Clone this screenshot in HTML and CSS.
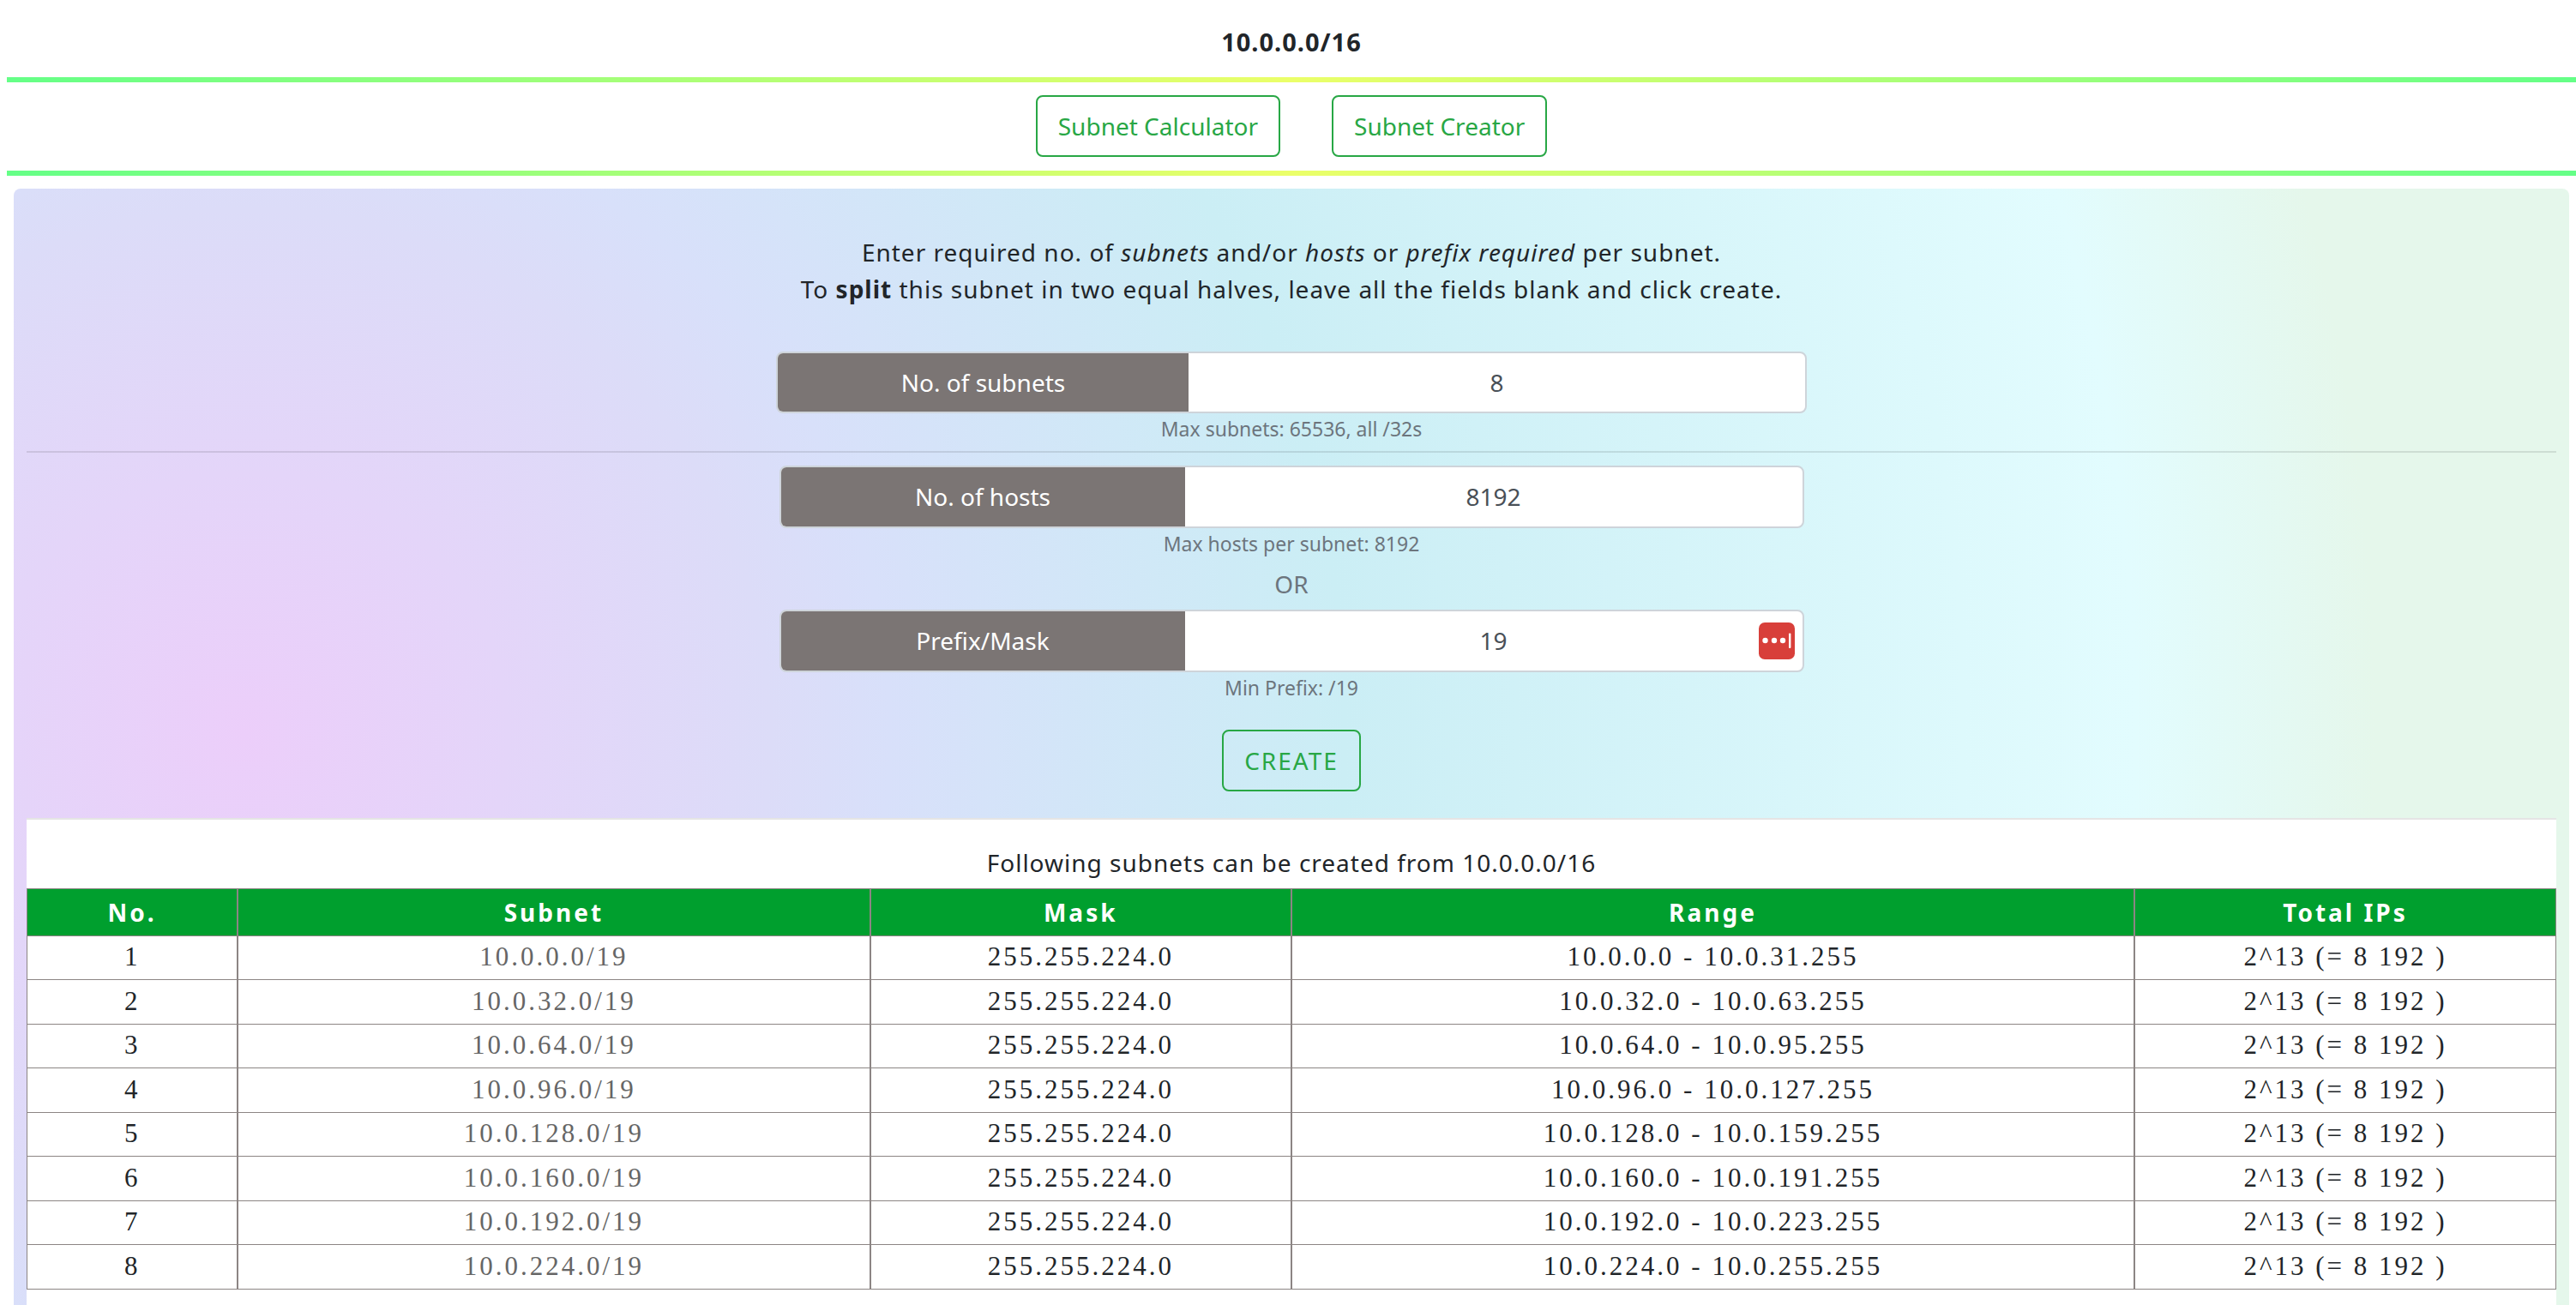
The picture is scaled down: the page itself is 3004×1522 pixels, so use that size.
FILE: index.html
```html
<!DOCTYPE html>
<html lang="en">
<head>
<meta charset="utf-8">
<title>Subnet Creator</title>
<link rel="stylesheet" href="styles.css">
</head>
<body>
<header class="title"><h1>10.0.0.0/16</h1></header>
<nav class="modes">
  <button type="button" class="btn">Subnet Calculator</button>
  <button type="button" class="btn">Subnet Creator</button>
</nav>
<main class="panel">
  <form class="form">
    <p class="intro">Enter required no. of <em>subnets</em> and/or <em>hosts</em> or <em>prefix required</em> per subnet.<br>To <strong>split</strong> this subnet in two equal halves, leave all the fields blank and click create.</p>
    <div class="group group-wide">
      <label for="subnets">No. of subnets</label>
      <input id="subnets" type="text" value="8">
    </div>
    <small class="hint">Max subnets: 65536, all /32s</small>
    <hr class="rule">
    <div class="group">
      <label for="hosts">No. of hosts</label>
      <input id="hosts" type="text" value="8192">
    </div>
    <small class="hint">Max hosts per subnet: 8192</small>
    <span class="or">OR</span>
    <div class="group">
      <label for="prefix">Prefix/Mask</label>
      <input id="prefix" type="text" value="19">
      <svg class="vault" viewBox="0 0 42 43" aria-hidden="true">
        <rect width="42" height="43" rx="7" fill="#d83f3a"/>
        <g fill="#fff"><circle cx="7.500" cy="21" r="3.200"/><circle cx="18" cy="21" r="3.200"/><circle cx="28" cy="21" r="3.200"/><rect x="35" y="12.500" width="2.400" height="17.500" rx="1"/></g>
      </svg>
    </div>
    <small class="hint">Min Prefix: /19</small>
    <button type="button" class="btn create">CREATE</button>
  </form>
  <section class="result">
    <table>
      <caption>Following subnets can be created from 10.0.0.0/16</caption>
      <colgroup><col class="c1"><col class="c3"><col class="c2"><col class="c4"><col class="c2"></colgroup>
      <thead><tr><th>No.</th><th>Subnet</th><th>Mask</th><th>Range</th><th>Total IPs</th></tr></thead>
      <tbody>
        <tr><td>1</td><td><a href="#">10.0.0.0/19</a></td><td>255.255.224.0</td><td>10.0.0.0 - 10.0.31.255</td><td>2^13 (= 8 192 )</td></tr>
        <tr><td>2</td><td><a href="#">10.0.32.0/19</a></td><td>255.255.224.0</td><td>10.0.32.0 - 10.0.63.255</td><td>2^13 (= 8 192 )</td></tr>
        <tr><td>3</td><td><a href="#">10.0.64.0/19</a></td><td>255.255.224.0</td><td>10.0.64.0 - 10.0.95.255</td><td>2^13 (= 8 192 )</td></tr>
        <tr><td>4</td><td><a href="#">10.0.96.0/19</a></td><td>255.255.224.0</td><td>10.0.96.0 - 10.0.127.255</td><td>2^13 (= 8 192 )</td></tr>
        <tr><td>5</td><td><a href="#">10.0.128.0/19</a></td><td>255.255.224.0</td><td>10.0.128.0 - 10.0.159.255</td><td>2^13 (= 8 192 )</td></tr>
        <tr><td>6</td><td><a href="#">10.0.160.0/19</a></td><td>255.255.224.0</td><td>10.0.160.0 - 10.0.191.255</td><td>2^13 (= 8 192 )</td></tr>
        <tr><td>7</td><td><a href="#">10.0.192.0/19</a></td><td>255.255.224.0</td><td>10.0.192.0 - 10.0.223.255</td><td>2^13 (= 8 192 )</td></tr>
        <tr><td>8</td><td><a href="#">10.0.224.0/19</a></td><td>255.255.224.0</td><td>10.0.224.0 - 10.0.255.255</td><td>2^13 (= 8 192 )</td></tr>
      </tbody>
    </table>
  </section>
</main>
</body>
</html>
```
FILE: styles.css
```css
* { box-sizing: border-box; }

body {
  margin: 0;
  padding-left: 8px;
  min-height: 100vh;
  display: flex;
  flex-direction: column;
  background: #fff;
  color: #212529;
  font-family: "Noto Sans", "Open Sans", sans-serif;
  font-size: 28px;
  line-height: 43px;
}

.title { padding: 27px 0 20px; text-align: center; }
.title h1 { margin: 0; font-size: 29px; font-weight: 700; letter-spacing: 1px; }

.modes {
  display: flex;
  justify-content: center;
  gap: 60px;
  padding: 15px 0 16px;
  border-style: solid;
  border-width: 6px 0;
  border-image: linear-gradient(90deg, #64ff87, #ebff69, #64ff87) 6;
}

.btn {
  height: 72px;
  padding: 0 24px;
  border: 2px solid #28a745;
  border-radius: 8px;
  background: transparent;
  color: #28a745;
  font: inherit;
}

.panel {
  flex: 1;
  display: flex;
  flex-direction: column;
  margin: 15px 8px 0;
  padding: 53px 15px 0;
  border-radius: 8px 8px 0 0;
  background: radial-gradient(circle farthest-corner at 9% 49%, #eccefa 0%, #dcdcf8 22%, #d8e0fa 27%, #cbeef5 46%, #e2fcfe 79%, #e5f7eb 89%);
}

.form { display: flex; flex-direction: column; align-items: center; }
.intro { margin: 0 0 51px; text-align: center; letter-spacing: 1px; }

.group {
  position: relative;
  display: flex;
  width: 1195px;
  max-width: 100%;
  height: 73px;
  border: 2px solid #ced4da;
  border-radius: 8px;
  background: #fff;
  overflow: hidden;
}
.group-wide { width: 1202px; height: 72px; }
.group label {
  flex: 0 0 471px;
  display: flex;
  align-items: center;
  justify-content: center;
  background: #7b7574;
  color: #fff;
}
.group-wide label { flex-basis: 479px; }
.group input {
  flex: 1;
  min-width: 0;
  padding: 0 23px;
  border: 0;
  outline: 0;
  background: transparent;
  color: #495057;
  font: inherit;
  text-align: center;
}
.vault { position: absolute; right: 9px; top: 13px; width: 42px; height: 43px; }

.hint { font-size: 23px; line-height: 36px; color: #6c757d; }
.rule { align-self: stretch; height: 2px; margin: 8px 0 15px; border: 0; background: rgba(0, 0, 0, 0.1); }
.or { margin: 8px 0; color: #6c757d; }
.create { margin: 31px 0 31px; letter-spacing: 2px; }

.result { flex: 1; border-top: 2px solid #e5e5e5; background: #fff; }

table { width: 100%; table-layout: fixed; border-collapse: collapse; text-align: center; }
caption { padding: 29px 0 8px; letter-spacing: 1px; }
.c1 { width: calc(100% / 12); }
.c2 { width: calc(100% / 6); }
.c3 { width: 25%; }
.c4 { width: calc(100% / 3); }
th, td { padding: 0; border: 1px solid #8c8584; border-width: 1px 2px; }
th:first-child, td:first-child { border-left-width: 1px; }
th:last-child, td:last-child { border-right-width: 1px; }
th { height: 55px; background: #009f2e; color: #fff; font-weight: 700; letter-spacing: 3px; }
td { height: 51px; padding-bottom: 2px; font-family: "Liberation Serif", serif; font-size: 31px; line-height: 36px; letter-spacing: 3px; }
tr:nth-child(even) td { height: 52px; }
td a { color: #666; text-decoration: none; }
```
